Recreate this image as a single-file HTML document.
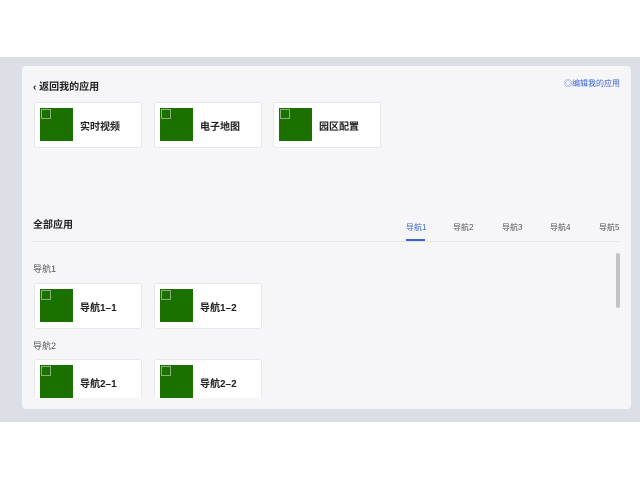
<!DOCTYPE html>
<html><head><meta charset="utf-8"><style>
*{margin:0;padding:0;box-sizing:border-box}
body{width:640px;height:480px;background:#fff;position:relative;overflow:hidden;font-family:"Liberation Sans","Noto Sans CJK SC",sans-serif;color:#222}
.band{position:absolute;left:0;top:57px;width:640px;height:365px;background:#dcdfe5}
.card{position:absolute;left:22px;top:66px;width:609px;height:343px;background:#f6f6f9;border-radius:4px;overflow:hidden}
.a{position:absolute;font-size:10px}
.app{position:absolute;width:108px;height:46px;background:#fff;border:1px solid #e8e8ec;border-radius:2px}
.app i{position:absolute;left:5px;top:5px;width:33px;height:33px;background:#1a7100}
.app i:before{content:"";position:absolute;left:1px;top:1px;width:8px;height:8px;border:1px solid #8bb07f}
.app span{position:absolute;left:45px;top:15px;font-size:10px;font-weight:bold;color:#222}
.tab{position:absolute;top:156px;font-size:8px;color:#555}
</style></head><body>
<div class="band"></div>
<div class="card">
<div class="a" style="left:11px;top:12px;font-weight:bold">‹ 返回我的应用</div>
<div class="a" style="left:542px;top:12px;font-size:8px;color:#3a63d8">◎编辑我的应用</div>
<div class="app" style="left:12px;top:36px"><i></i><span>实时视频</span></div>
<div class="app" style="left:132px;top:36px"><i></i><span>电子地图</span></div>
<div class="app" style="left:251px;top:36px"><i></i><span>园区配置</span></div>
<div class="a" style="left:11px;top:150px;font-weight:bold">全部应用</div>
<div class="tab" style="left:384px;color:#3a63d8">导航1</div>
<div class="tab" style="left:431px">导航2</div>
<div class="tab" style="left:480px">导航3</div>
<div class="tab" style="left:528px">导航4</div>
<div class="tab" style="left:577px">导航5</div>
<div style="position:absolute;left:384px;top:173px;width:19px;height:2px;background:#3a63d8"></div>
<div style="position:absolute;left:11px;top:175px;width:587px;height:1px;background:#e6e6ea"></div>
<div style="position:absolute;left:594px;top:187px;width:4px;height:55px;background:#c4c4c8;border-radius:2px"></div>
<div class="a" style="left:11px;top:196px;font-size:9px;color:#555">导航1</div>
<div class="app" style="left:12px;top:217px"><i></i><span>导航1–1</span></div>
<div class="app" style="left:132px;top:217px"><i></i><span>导航1–2</span></div>
<div class="a" style="left:11px;top:273px;font-size:9px;color:#555">导航2</div>
<div class="app" style="left:12px;top:293px"><i></i><span>导航2–1</span></div>
<div class="app" style="left:132px;top:293px"><i></i><span>导航2–2</span></div>
<div style="position:absolute;left:0;top:332px;width:609px;height:11px;background:#f6f6f9"></div>
</div>
</body></html>
